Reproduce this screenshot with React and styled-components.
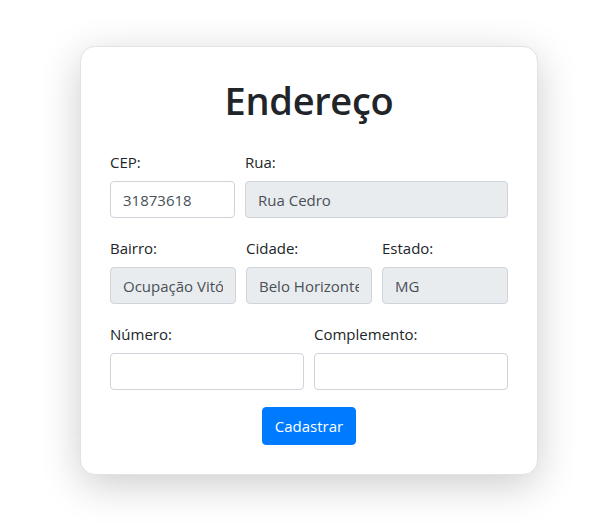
import React from "react";
import styled, { createGlobalStyle } from "styled-components";

const Global = createGlobalStyle`
  html, body { margin: 0; padding: 0; background: #ffffff; }
  body { font-family: "Open Sans", "Noto Sans", sans-serif; color: #212529; }
  * { box-sizing: border-box; }
`;

const Page = styled.div`
  min-height: 530px;
  padding: 46px 0 60px 80px;
`;

const Card = styled.form`
  width: 458px;
  padding: 29px;
  background: #fff;
  border: 1px solid #e2e2e2;
  border-radius: 15px;
  box-shadow: 0 10px 40px rgba(0, 0, 0, 0.2);
  display: flex;
  flex-direction: column;
`;

const Title = styled.h1`
  margin: 0 0 26px;
  font-size: 38px;
  line-height: 48px;
  font-weight: 600;
  letter-spacing: -0.3px;
  text-align: center;
  color: #212529;
`;

const Row = styled.div`
  display: grid;
  grid-template-columns: ${(p) => p.$cols};
  column-gap: 10px;
  margin-bottom: 18px;
`;

const Field = styled.div`
  display: flex;
  flex-direction: column;
  min-width: 0;
`;

const Label = styled.label`
  font-size: 15px;
  line-height: 24px;
  margin-bottom: 7px;
  color: #212529;
`;

const Input = styled.input`
  width: 100%;
  height: 37px;
  padding: 0 12px;
  font-family: inherit;
  font-size: 15px;
  color: #495057;
  background: ${(p) => (p.disabled ? "#e9ecef" : "#fff")};
  border: 1px solid #ced4da;
  border-radius: 4px;
  outline: none;
  &:disabled { color: #495057; opacity: 1; }
`;

const Actions = styled.div`
  display: flex;
  justify-content: center;
  margin-top: -1px;
`;

const Button = styled.button`
  height: 38px;
  padding: 0 12px;
  font-family: inherit;
  font-size: 15px;
  color: #fff;
  background: #007bff;
  border: 1px solid #007bff;
  border-radius: 4px;
  cursor: pointer;
`;

export default function App() {
  return (
    <>
      <Global />
      <Page>
        <Card onSubmit={(e) => e.preventDefault()}>
          <Title>Endereço</Title>
          <Row $cols="125px 1fr">
            <Field>
              <Label>CEP:</Label>
              <Input defaultValue="31873618" />
            </Field>
            <Field>
              <Label>Rua:</Label>
              <Input disabled defaultValue="Rua Cedro" />
            </Field>
          </Row>
          <Row $cols="1fr 1fr 1fr">
            <Field>
              <Label>Bairro:</Label>
              <Input disabled defaultValue="Ocupação Vitória" />
            </Field>
            <Field>
              <Label>Cidade:</Label>
              <Input disabled defaultValue="Belo Horizonte" />
            </Field>
            <Field>
              <Label>Estado:</Label>
              <Input disabled defaultValue="MG" />
            </Field>
          </Row>
          <Row $cols="1fr 1fr">
            <Field>
              <Label>Número:</Label>
              <Input />
            </Field>
            <Field>
              <Label>Complemento:</Label>
              <Input />
            </Field>
          </Row>
          <Actions>
            <Button type="submit">Cadastrar</Button>
          </Actions>
        </Card>
      </Page>
    </>
  );
}
